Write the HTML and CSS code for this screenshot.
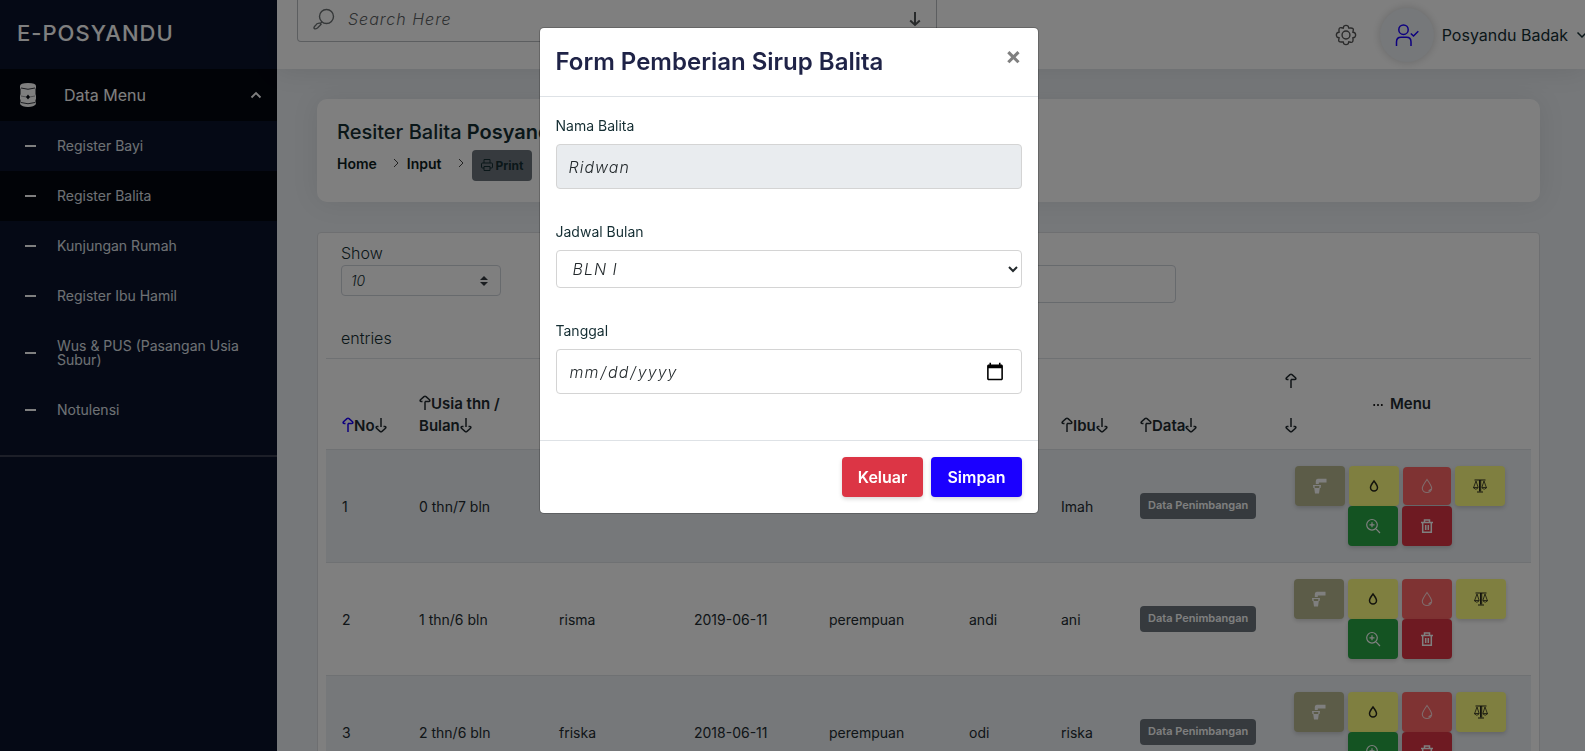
FILE: index.html
```html
<!DOCTYPE html>
<html lang="id">
<head>
<meta charset="utf-8">
<title>E-Posyandu</title>
<link rel="stylesheet" href="styles.css">
</head>
<body>
<svg class="sprite" aria-hidden="true">
  <symbol id="i-up" viewBox="0 0 12 16"><path d="M6 15V6.500M3.500 6.500H2.300Q.4 6.200 1.500 4.800L5 1.600Q6 .9 7 1.600L10.500 4.800Q11.600 6.200 9.700 6.500H6" fill="none" stroke="currentColor" stroke-width="1.500"/></symbol>
  <symbol id="i-down" viewBox="0 0 12 16"><path d="M6 1V10M3.500 9.500H2.300Q.4 9.800 1.500 11.200L5 14.400Q6 15.100 7 14.400L10.500 11.200Q11.600 9.800 9.700 9.500H8.500" fill="none" stroke="currentColor" stroke-width="1.500"/></symbol>
  <symbol id="i-tap" viewBox="0 0 16 16"><path d="M5.500 1Q3.800 1 3.800 3V6H6.800V4.600H14.500V.8H5.500Z"/><path d="M1 7H9L8.600 10H7.800L7 15.500H3L2.200 10H1.400Z"/><path d="M2.600 8H7.400L7.200 10H2.800Z" class="tap-hole"/></symbol>
  <symbol id="i-drop" viewBox="0 0 16 16"><path d="M8 3Q4.500 7.500 4.500 9.600A3.500 3.500 0 0 0 11.500 9.600Q11.500 7.500 8 3Z" fill="none" stroke="currentColor" stroke-width="1.500"/></symbol>
  <symbol id="i-blood" viewBox="0 0 16 16"><path d="M8 1.500Q3.300 8 3.300 10.300A4.700 4.200 0 0 0 12.700 10.300Q12.700 8 8 1.500Z" fill="none" stroke="currentColor" stroke-width="1.100"/><path d="M11.800 11A3.600 3.600 0 0 1 9.500 13.200" fill="none" stroke="currentColor" stroke-width="1.400"/></symbol>
  <symbol id="i-scale" viewBox="0 0 16 16"><path d="M2.500 2H13.500M7.500 2V13.500M8.700 2V13.500M5 14H11" fill="none" stroke="currentColor" stroke-width="1"/><path d="M4 3L1.800 9M4 3L6 9M12 3L10 9M12 3L14.200 9M1 9.500H6.500M9.500 9.500H15M1.500 10Q4 12.500 6 10M10 10Q12 12.500 14.500 10" fill="none" stroke="currentColor" stroke-width=".8"/></symbol>
  <symbol id="i-zoom" viewBox="0 0 16 16"><path d="M7 1.500A5.300 5.300 0 1 0 7 12.100A5.300 5.300 0 1 0 7 1.500M10.800 10.600L15 15M7 4.300V9.300M4.500 6.800H9.500" fill="none" stroke="currentColor" stroke-width="1.200"/></symbol>
  <symbol id="i-trash" viewBox="0 0 16 16"><path d="M2 4.500H14M5.500 4V2H10.500V4M3.700 4.500V14.200H12.300V4.500M6.700 7V12M9.300 7V12" fill="none" stroke="currentColor" stroke-width="1.500"/></symbol>
</svg>

<div class="app">
  <aside class="sidebar">
    <div class="brand">E-POSYANDU</div>
    <button class="menu-toggle" type="button" aria-expanded="true">
      <svg class="barrel" viewBox="0 0 16 24"><path d="M0 3Q0 0 8 0T16 3V5L15.500 6V11L16 13V16L15.500 17V19L16 21Q14 24 8 24T0 21L.5 19V17L0 16V13L.5 11V6L0 5Z" fill="#fff"/><path d="M1 5Q8 7.500 15 5M1 19.500Q8 22 15 19.500" fill="none" stroke="#03060f" stroke-width=".8"/><path d="M1 13Q8 15.500 15 13" fill="none" stroke="#03060f" stroke-width=".4"/><path d="M8 11.500L10 14L8 16.500L6 14Z" fill="#03060f"/></svg>
      <span>Data Menu</span>
      <svg class="caret" viewBox="0 0 12 8"><path d="M1.500 6.500L6 2L10.500 6.500" fill="none" stroke="#fff" stroke-width="1.800"/></svg>
    </button>
    <nav class="menu">
      <a href="#">Register Bayi</a>
      <a href="#" class="active">Register Balita</a>
      <a href="#">Kunjungan Rumah</a>
      <a href="#">Register Ibu Hamil</a>
      <a href="#">Wus &amp; PUS (Pasangan Usia Subur)</a>
      <a href="#">Notulensi</a>
    </nav>
  </aside>

  <main class="main">
    <header class="topbar">
      <label class="search">
        <svg class="search-icon" viewBox="0 0 22 22"><circle cx="13.500" cy="8.500" r="7" fill="none" stroke="currentColor" stroke-width="1.400"/><path d="M9 14L7.500 15.300Q4 14.500 2.500 17.500Q.3 19.500 1.300 20.500T4.500 20L8 16.500L7 15" fill="none" stroke="currentColor" stroke-width="1.400"/></svg>
        <input type="text" placeholder="Search Here" aria-label="Search Here">
        <svg class="search-arrow" viewBox="0 0 12 16"><path d="M6 1V14M1.200 9.500L6 14L10.800 9.500" fill="none" stroke="currentColor" stroke-width="2"/></svg>
      </label>
      <div class="account">
        <button class="gear" type="button" aria-label="Settings">
          <svg viewBox="0 0 24 24" fill="none" stroke="currentColor" stroke-width="1.500"><circle cx="12" cy="12" r="4.300"/><path d="M9.500 2.500Q12 .5 14.500 2.500L15 4.500L17 4.300Q20.500 4.200 19.900 7L19.500 9L21.500 9.500Q23.500 12 21.500 14.500L19.500 15L19.700 17Q19.800 20.500 17 19.900L15 19.500L14.500 21.500Q12 23.500 9.500 21.500L9 19.500L7 19.700Q3.500 19.800 4.100 17L4.500 15L2.500 14.500Q.5 12 2.500 9.500L4.500 9L4.300 7Q4.200 3.500 7 4.100L9 4.500Z"/></svg>
        </button>
        <span class="avatar"><svg viewBox="0 0 24 22" fill="none" stroke="#1b00ff" stroke-width="1.500"><circle cx="8.500" cy="5.700" r="4.700"/><path d="M1.500 22V18Q1.500 13.300 6 13.300H11.500Q16 13.300 16 18V22M15.800 9.500L18.500 12L23.300 7.300"/></svg></span>
        <button class="user" type="button">Posyandu Badak
          <svg viewBox="0 0 12 8"><path d="M1.500 1.500L6 6L10.500 1.500" fill="none" stroke="currentColor" stroke-width="1.500"/></svg>
        </button>
      </div>
    </header>

    <div class="content">
      <section class="page-head">
        <h1>Resiter Balita <b>Posyandu</b></h1>
        <nav class="crumbs">
          <a href="#">Home</a>
          <svg viewBox="0 0 6 10"><path d="M1 1L5 5L1 9" fill="none" stroke="currentColor"/></svg>
          <a href="#">Input</a>
          <svg viewBox="0 0 6 10"><path d="M1 1L5 5L1 9" fill="none" stroke="currentColor"/></svg>
          <button class="print" type="button"><svg viewBox="0 0 12 12" fill="none" stroke="currentColor"><path d="M3 4V.5H9V4M3 9H1.500Q.5 9 .5 8V5Q.5 4 1.500 4H10.500Q11.500 4 11.500 5V8Q11.500 9 10.500 9H9M3 7.500H9V11.500H3Z"/></svg>Print</button>
        </nav>
      </section>

      <section class="table-card">
        <div class="controls">
          <div class="length">
            <label for="len">Show</label>
            <select id="len"><option>10</option></select>
            <span>entries</span>
          </div>
          <input class="filter" type="search" aria-label="Search">
        </div>
        <table>
          <colgroup><col class="c1"><col class="c2"><col class="c3"><col class="c3"><col class="c2"><col class="c4"><col class="c5"><col class="c6"><col class="c7"></colgroup>
          <thead>
            <tr>
              <th><svg class="sort on"><use href="#i-up"/></svg>No<svg class="sort"><use href="#i-down"/></svg></th>
              <th><svg class="sort"><use href="#i-up"/></svg>Usia thn / Bulan<svg class="sort"><use href="#i-down"/></svg></th>
              <th></th><th></th><th></th><th></th>
              <th><svg class="sort"><use href="#i-up"/></svg>Ibu<svg class="sort"><use href="#i-down"/></svg></th>
              <th><svg class="sort"><use href="#i-up"/></svg>Data<svg class="sort"><use href="#i-down"/></svg></th>
              <th class="menu-head">
                <div><svg class="sort"><use href="#i-up"/></svg></div>
                <div class="menu-title"><svg viewBox="0 0 10 4"><circle cx="1.200" cy="2" r="1"/><circle cx="5" cy="2" r="1"/><circle cx="8.800" cy="2" r="1"/></svg>Menu</div>
                <div><svg class="sort"><use href="#i-down"/></svg></div>
              </th>
            </tr>
          </thead>
          <tbody>
            <tr>
              <td>1</td><td>0 thn/7 bln</td><td></td><td></td><td></td><td></td><td>Imah</td>
              <td><a class="badge" href="#">Data Penimbangan</a></td>
              <td><div class="actions">
                <button class="act tap" type="button" aria-label="Imunisasi"><svg><use href="#i-tap"/></svg></button>
                <button class="act yellow" type="button" aria-label="Sirup"><svg><use href="#i-drop"/></svg></button>
                <button class="act blood pressed" type="button" aria-label="Vitamin"><svg><use href="#i-blood"/></svg></button>
                <button class="act yellow" type="button" aria-label="Timbang"><svg><use href="#i-scale"/></svg></button>
                <button class="act green" type="button" aria-label="Detail"><svg><use href="#i-zoom"/></svg></button>
                <button class="act red" type="button" aria-label="Hapus"><svg><use href="#i-trash"/></svg></button>
              </div></td>
            </tr>
            <tr>
              <td>2</td><td>1 thn/6 bln</td><td>risma</td><td>2019-06-11</td><td>perempuan</td><td>andi</td><td>ani</td>
              <td><a class="badge" href="#">Data Penimbangan</a></td>
              <td><div class="actions">
                <button class="act tap" type="button" aria-label="Imunisasi"><svg><use href="#i-tap"/></svg></button>
                <button class="act yellow" type="button" aria-label="Sirup"><svg><use href="#i-drop"/></svg></button>
                <button class="act blood" type="button" aria-label="Vitamin"><svg><use href="#i-blood"/></svg></button>
                <button class="act yellow" type="button" aria-label="Timbang"><svg><use href="#i-scale"/></svg></button>
                <button class="act green" type="button" aria-label="Detail"><svg><use href="#i-zoom"/></svg></button>
                <button class="act red" type="button" aria-label="Hapus"><svg><use href="#i-trash"/></svg></button>
              </div></td>
            </tr>
            <tr>
              <td>3</td><td>2 thn/6 bln</td><td>friska</td><td>2018-06-11</td><td>perempuan</td><td>odi</td><td>riska</td>
              <td><a class="badge" href="#">Data Penimbangan</a></td>
              <td><div class="actions">
                <button class="act tap" type="button" aria-label="Imunisasi"><svg><use href="#i-tap"/></svg></button>
                <button class="act yellow" type="button" aria-label="Sirup"><svg><use href="#i-drop"/></svg></button>
                <button class="act blood" type="button" aria-label="Vitamin"><svg><use href="#i-blood"/></svg></button>
                <button class="act yellow" type="button" aria-label="Timbang"><svg><use href="#i-scale"/></svg></button>
                <button class="act green" type="button" aria-label="Detail"><svg><use href="#i-zoom"/></svg></button>
                <button class="act red" type="button" aria-label="Hapus"><svg><use href="#i-trash"/></svg></button>
              </div></td>
            </tr>
          </tbody>
        </table>
      </section>
    </div>
  </main>
</div>

<div class="backdrop">
  <form class="modal" role="dialog" aria-labelledby="modal-title">
    <header class="modal-head">
      <h2 id="modal-title">Form Pemberian Sirup Balita</h2>
      <button class="close" type="button" aria-label="Close">×</button>
    </header>
    <div class="modal-body">
      <div class="field"><label for="nama">Nama Balita</label><input id="nama" type="text" value="Ridwan" readonly></div>
      <div class="field"><label for="bulan">Jadwal Bulan</label><select id="bulan"><option>BLN I</option></select></div>
      <div class="field"><label for="tanggal">Tanggal</label><input id="tanggal" type="date"></div>
    </div>
    <footer class="modal-foot">
      <button class="btn danger" type="button">Keluar</button>
      <button class="btn primary" type="submit">Simpan</button>
    </footer>
  </form>
</div>
</body>
</html>
```
FILE: styles.css
```css
*, *::before, *::after { box-sizing: border-box; }
body { margin: 0; font-family: Inter, "Liberation Sans", sans-serif; font-size: 16px; color: #152e33; }
button, input, select { font-family: inherit; margin: 0; }
button { border: 0; cursor: pointer; }
a { text-decoration: none; color: inherit; }
.sprite { display: none; }

.app { display: flex; height: 100vh; overflow: hidden; background: #ecf0f4; }

/* Sidebar */
.sidebar { flex: 0 0 277px; background: #0b132b; color: #fff; }
.brand { height: 69px; padding: 0 17px; font-size: 22px; font-weight: 500; line-height: 66px; letter-spacing: 1px; }
.menu-toggle { display: flex; align-items: center; width: 100%; height: 52px; padding: 0 15px 0 20px; background: #03060f; color: #fff; font-size: 16px; }
.menu-toggle span { flex: 1; margin-left: 28px; text-align: left; }
.barrel { width: 16px; height: 24px; }
.caret { width: 12px; height: 8px; }
.menu { padding-bottom: 20px; border-bottom: 2px solid #3a3f50; }
.menu a { display: flex; align-items: center; gap: 21px; padding: 18px 25px; font-size: 14px; line-height: 14px; color: #dfe2e8; }
.menu a::before { content: ""; flex: 0 0 11px; height: 2px; background: #fff; }
.menu .active { background: #03060f; }

/* Top bar */
.main { flex: 1; min-width: 0; }
.topbar { display: flex; justify-content: space-between; align-items: flex-start; height: 69px; padding-left: 20px; background: #fff; box-shadow: 0 0 28px rgba(0, 0, 0, .1); }
.search { display: flex; align-items: center; width: 640px; height: 42px; padding: 0 15px 4px; border: 1px solid #b8bcc0; border-top: 0; border-radius: 0 0 4px 4px; color: #6b7072; }
.search input { flex: 1; margin: 0 13px; padding: 0; border: 0; outline: 0; background: none; font-size: 16px; font-style: italic; font-weight: 300; letter-spacing: 1px; }
.search input::placeholder { color: #5c6163; }
.search-icon { width: 22px; height: 22px; }
.search-arrow { width: 12px; height: 16px; color: #505456; }
.account { display: flex; align-items: center; height: 69px; }
.gear { padding: 0; background: none; color: #555; }
.gear svg { display: block; width: 22px; height: 22px; }
.avatar { display: grid; place-items: center; width: 54px; height: 54px; margin: 0 8px 0 23px; border-radius: 50%; background: #ecf0f4; box-shadow: 0 0 10px rgba(0, 0, 0, .18); }
.avatar svg { width: 24px; height: 22px; }
.user { display: flex; align-items: center; gap: 8px; padding: 0; margin-right: -3px; background: none; color: #152e33; font-size: 16px; }
.user svg { width: 12px; height: 8px; }

/* Page heading */
.content { padding: 30px 45px 0 40px; }
.page-head { height: 103px; padding: 20px; border-radius: 10px; background: #fff; box-shadow: 0 0 28px rgba(0, 0, 0, .08); }
.page-head h1 { margin: 0; font-size: 20px; font-weight: 500; line-height: 26px; }
.page-head b { font-weight: 600; }
.crumbs { display: flex; align-items: center; height: 40px; font-size: 14px; font-weight: 600; color: #0c1c20; }
.crumbs a { margin-bottom: 4px; }
.crumbs > svg { width: 6px; height: 10px; margin: 0 8px 4px 16px; color: #444; }
.print { display: flex; align-items: center; gap: 3px; height: 31px; padding: 0 9px; border-radius: 4px; background: #6c757d; color: #152e33; font-size: 12px; font-weight: 700; }
.print svg { width: 12px; height: 12px; }

/* Table */
.table-card { margin-top: 30px; padding: 8px; border: 1px solid #dcdfe2; border-radius: 4px; background: #fff; }
.controls { display: flex; justify-content: space-between; height: 117px; padding: 0 355px 0 15px; }
.length { display: flex; flex-direction: column; width: 160px; font-weight: 300; }
.length label { line-height: 24px; }
.length select { appearance: none; height: 31px; padding: 0 9px; border: 1px solid #ced4da; border-radius: 4px; color: #152e33; font-size: 14px; font-style: italic; font-weight: 300; background: no-repeat right 12px center / 8px 10px url("data:image/svg+xml,%3Csvg xmlns='http://www.w3.org/2000/svg' viewBox='0 0 8 10'%3E%3Cpath d='M0 4L4 0L8 4ZM0 6L4 10L8 6Z' fill='%23343a40'/%3E%3C/svg%3E"); }
.length span { margin-top: 30px; line-height: 24px; }
.filter { width: 240px; height: 38px; margin-top: 24px; border: 1px solid #ced4da; border-radius: 4px; background: #fff; }
table { width: 100%; table-layout: fixed; border-collapse: collapse; color: #222b30; }
.c1 { width: 77px; }
.c2 { width: 140px; }
.c3 { width: 135px; }
.c4 { width: 92px; }
.c5 { width: 79px; }
.c6 { width: 145px; }
.c7 { width: 262px; }
th { height: 91px; padding: 0 8px 12px 16px; border-top: 1px solid #dee2e6; font-size: 15px; font-weight: 600; line-height: 22px; text-align: left; vertical-align: bottom; }
td { padding: 16px; border-top: 1px solid #dee2e6; font-size: 14px; vertical-align: middle; }
th:nth-child(2) { padding-right: 32px; }
tbody tr:nth-child(odd) { background: #ecf0f4; }
.sort { width: 12px; height: 16px; vertical-align: -2px; }
.on { color: #1b00ff; }
.menu-head { padding-right: 12px; }
.menu-title { text-align: center; }
.menu-title svg { width: 10px; height: 4px; margin-right: 7px; vertical-align: middle; }
.badge { display: inline-block; height: 26px; padding: 0 8px; border-radius: 4px; background: #6c757d; color: #fff; font-size: 11px; font-weight: 600; line-height: 24px; white-space: nowrap; }
.actions { display: flex; flex-wrap: wrap; justify-content: center; align-items: center; column-gap: 4px; }
.act { display: grid; place-items: center; width: 50px; height: 40px; padding: 0; border-radius: 4px; color: #fff; box-shadow: 0 2px 4px rgba(0, 0, 0, .16); }
.act svg { width: 16px; height: 16px; fill: currentColor; }
.tap { background: #b8b890; }
.tap-hole { fill: #b8b890; }
.yellow { background: #ffff80; color: #26261a; }
.blood { background: #ff6666; color: #ffd8d8; }
.pressed { width: 48px; height: 38px; }
.green { background: #28a745; }
.red { background: #dc3545; }

/* Modal */
.backdrop { position: fixed; inset: 0; display: flex; justify-content: center; align-items: flex-start; padding: 27px 8px 0 0; background: rgba(0, 0, 0, .5); overflow: hidden; }
.modal { width: 500px; border: 1px solid rgba(0, 0, 0, .2); border-radius: 5px; background: #fff; background-clip: padding-box; }
.modal-head { display: flex; justify-content: space-between; align-items: flex-start; padding: 16px; border-bottom: 1px solid #dee2e6; }
.modal-head h2 { margin: 0; color: #1f2347; font-size: 24px; font-weight: 600; line-height: 36px; }
.close { padding: 0; background: none; color: #808080; font-size: 24px; font-weight: 700; line-height: 24px; }
.modal-body { display: grid; gap: 32px; padding: 18px 16px 46px; }
.field { display: grid; gap: 8px; }
.field label { font-size: 14px; line-height: 21px; }
.field input, .field select { width: 100%; height: 45px; padding: 0 12px; border: 1px solid #d4d4d4; border-radius: 4px; background: #fff; color: #23292c; font-size: 16px; font-style: italic; font-weight: 300; letter-spacing: 1px; }
.field select { height: 38px; }
.field input[readonly] { background: #e9ecef; }
.field input::-webkit-calendar-picker-indicator { width: 20px; height: 20px; margin-right: 2px; }
.modal-foot { display: flex; justify-content: flex-end; gap: 8px; padding: 16px; border-top: 1px solid #dee2e6; }
.btn { height: 40px; padding: 0 16px; border-radius: 4px; color: #fff; font-size: 16px; font-weight: 600; box-shadow: 0 2px 4px rgba(0, 0, 0, .16); }
.danger { background: #dc3545; }
.primary { background: #1b00ff; }
```
